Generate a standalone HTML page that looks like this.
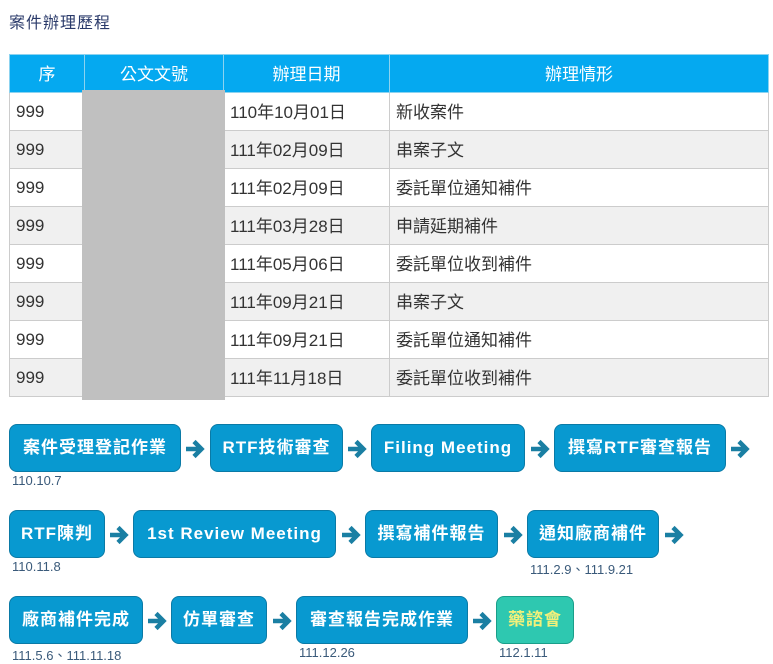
<!DOCTYPE html>
<html><head><meta charset="utf-8"><style>
body{margin:0;width:773px;height:662px;background:#fff;font-family:"Liberation Sans","Noto Sans CJK TC",sans-serif;position:relative;overflow:hidden}
.t{position:absolute;left:9px;top:9px;font-size:16px;color:#2a3a6a;letter-spacing:1px}
table{position:absolute;left:9px;top:54px;border-collapse:collapse;width:760px;font-size:17px;table-layout:fixed}
th{background:#05a9f0;color:#fff;font-weight:normal;height:38px;padding:0 0 3px 0;border:1px solid #8cd3f0;box-sizing:border-box}
td{height:38px;border:1px solid #ccc;padding:0 0 3px 6px;color:#333;white-space:nowrap;overflow:hidden;box-sizing:border-box}
td:first-child{padding:1px 0 0 6px}
tr.g td{background:#f0f0f0}
.gray{position:absolute;left:82px;top:90px;width:143px;height:310px;background:#c0c0c0}
.b{position:absolute;height:46px;line-height:46px;background:#0899d0;border:1.5px solid #0a7aa6;border-radius:8px;color:#fff;font-weight:bold;font-size:17px;text-align:center;letter-spacing:1px;box-sizing:content-box}
.b.y{background:#2ec8b0;border-color:#1a9e8a;color:#f3f07a}
.a{position:absolute;width:20px;height:20px}
.d{position:absolute;font-size:13px;color:#3a5a7a}
</style></head><body>
<div class="t">案件辦理歷程</div>
<table>
<colgroup><col style="width:75px"><col style="width:139px"><col style="width:166px"><col></colgroup>
<tr><th>序</th><th>公文文號</th><th>辦理日期</th><th>辦理情形</th></tr>
<tr><td>999</td><td></td><td>110年10月01日</td><td>新收案件</td></tr>
<tr class="g"><td>999</td><td></td><td>111年02月09日</td><td>串案子文</td></tr>
<tr><td>999</td><td></td><td>111年02月09日</td><td>委託單位通知補件</td></tr>
<tr class="g"><td>999</td><td></td><td>111年03月28日</td><td>申請延期補件</td></tr>
<tr><td>999</td><td></td><td>111年05月06日</td><td>委託單位收到補件</td></tr>
<tr class="g"><td>999</td><td></td><td>111年09月21日</td><td>串案子文</td></tr>
<tr><td>999</td><td></td><td>111年09月21日</td><td>委託單位通知補件</td></tr>
<tr class="g"><td>999</td><td></td><td>111年11月18日</td><td>委託單位收到補件</td></tr>
</table>
<div class="gray"></div>

<svg width="0" height="0" style="position:absolute"><defs><symbol id="ar" viewBox="0 0 20 20"><path d="M1 10H16M9 2.5L16.5 10L9 17.5" stroke="#1a7fa3" stroke-width="4.5" fill="none"/></symbol></defs></svg>

<div class="b" style="left:9px;top:424px;width:170px">案件受理登記作業</div>
<svg class="a" style="left:185px;top:439px"><use href="#ar"/></svg>
<div class="b" style="left:210px;top:424px;width:131px">RTF技術審查</div>
<svg class="a" style="left:347px;top:439px"><use href="#ar"/></svg>
<div class="b" style="left:371px;top:424px;width:152px">Filing Meeting</div>
<svg class="a" style="left:530px;top:439px"><use href="#ar"/></svg>
<div class="b" style="left:554px;top:424px;width:170px">撰寫RTF審查報告</div>
<svg class="a" style="left:730px;top:439px"><use href="#ar"/></svg>
<div class="d" style="left:12px;top:473px">110.10.7</div>

<div class="b" style="left:9px;top:510px;width:94px">RTF陳判</div>
<svg class="a" style="left:109px;top:525px"><use href="#ar"/></svg>
<div class="b" style="left:133px;top:510px;width:201px">1st Review Meeting</div>
<svg class="a" style="left:341px;top:525px"><use href="#ar"/></svg>
<div class="b" style="left:365px;top:510px;width:131px">撰寫補件報告</div>
<svg class="a" style="left:503px;top:525px"><use href="#ar"/></svg>
<div class="b" style="left:527px;top:510px;width:130px">通知廠商補件</div>
<svg class="a" style="left:664px;top:525px"><use href="#ar"/></svg>
<div class="d" style="left:12px;top:559px">110.11.8</div>
<div class="d" style="left:530px;top:559px">111.2.9、111.9.21</div>

<div class="b" style="left:9px;top:596px;width:132px">廠商補件完成</div>
<svg class="a" style="left:147px;top:611px"><use href="#ar"/></svg>
<div class="b" style="left:171px;top:596px;width:94px">仿單審查</div>
<svg class="a" style="left:272px;top:611px"><use href="#ar"/></svg>
<div class="b" style="left:296px;top:596px;width:170px">審查報告完成作業</div>
<svg class="a" style="left:472px;top:611px"><use href="#ar"/></svg>
<div class="b y" style="left:496px;top:596px;width:76px">藥諮會</div>
<div class="d" style="left:12px;top:645px">111.5.6、111.11.18</div>
<div class="d" style="left:299px;top:645px">111.12.26</div>
<div class="d" style="left:499px;top:645px">112.1.11</div>
</body></html>
